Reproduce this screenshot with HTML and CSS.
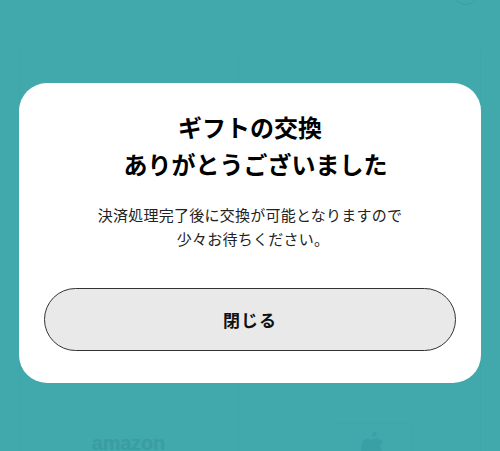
FILE: index.html
```html
<!DOCTYPE html>
<html lang="ja">
<head>
<meta charset="utf-8">
<title>ギフトの交換</title>
<link rel="stylesheet" href="styles.css">
</head>
<body>
<div class="page">
  <div class="top-circle"></div>
  <div class="tiles">
    <div class="tile"><span class="amazon">amazon</span></div>
    <div class="tile">
      <div class="apple-box">
        <svg class="apple" viewBox="0 0 26 30" width="26" height="30"><path d="M17 1c-3 1-5 3-5 6 3 0 5-3 5-6zM6 9c-3 1-5 5-5 9 0 5 3 11 6 11 2 0 3-1 5-1s3 1 5 1c3 0 5-4 6-7-3-2-4-7 0-10-2-3-6-4-9-3-2 1-3 1-4 1-1-1-2-2-4-1z"/></svg>
      </div>
    </div>
  </div>
  <div class="modal">
    <h1 class="title">ギフトの交換<br><span class="title-second">ありがとうございました</span></h1>
    <p class="message">決済処理完了後に交換が可能となりますので<br><span class="message-second">少々お待ちください。</span></p>
    <button class="close" type="button">閉じる</button>
  </div>
</div>
</body>
</html>
```
FILE: styles.css
```css
* { box-sizing: border-box; }
html, body { margin: 0; padding: 0; }
body {
  width: 500px;
  height: 451px;
  overflow: hidden;
  background: #41a8ab;
  font-family: "Noto Sans CJK JP", "Noto Sans", sans-serif;
}
.page {
  position: relative;
  width: 500px;
  height: 451px;
  overflow: hidden;
  padding: 52px 19px 0;
}
.top-circle {
  position: absolute;
  left: 454px;
  top: -19px;
  width: 24px;
  height: 24px;
  border: 1px solid #3a9ea1;
  border-radius: 50%;
}
.tiles {
  display: grid;
  grid-template-columns: 219px 243px;
  height: 399px;
  align-items: end;
}
.tile {
  height: 100%;
  border-left: 1px solid #3fa5a8;
  display: flex;
  justify-content: center;
  align-items: flex-end;
}
.tile:last-child { border-right: 1px solid #3fa5a8; }
.amazon {
  font-family: "Liberation Sans", sans-serif;
  font-weight: 700;
  font-size: 20px;
  line-height: 1;
  color: #3a9da1;
  margin-bottom: -2px;
  margin-right: 1px;
  letter-spacing: -0.2px;
}
.apple-box {
  width: 80px;
  height: 28px;
  display: flex;
  justify-content: center;
  overflow: hidden;
  margin-left: 26px;
  border: 1px solid #40a6a9;
  border-bottom: 0;
  padding-top: 6px;
}
.apple { fill: #3ba0a6; flex: none; }
.modal {
  position: absolute;
  left: 19px;
  top: 83px;
  width: 462px;
  height: 300px;
  background: #fff;
  border-radius: 28px;
  padding: 25px 25px 0;
  display: flex;
  flex-direction: column;
  align-items: center;
}
.title {
  margin: 0;
  font-size: 24px;
  line-height: 37px;
  font-weight: 700;
  color: #000;
  text-align: center;
}
.title-second {
  display: inline-block;
  margin-left: 11px;
}
.message {
  margin: 21px 0 0;
  font-size: 15px;
  line-height: 24px;
  letter-spacing: 0.25px;
  color: #222;
  text-align: center;
}
.message-second {
  display: inline-block;
  margin-left: 6px;
}
.close {
  margin-top: 37px;
  width: 412px;
  height: 63px;
  border: 1px solid #333;
  border-radius: 32px;
  background: #e9e9e9;
  font-family: inherit;
  font-size: 17px;
  font-weight: 700;
  letter-spacing: 1px;
  color: #111;
}
```
